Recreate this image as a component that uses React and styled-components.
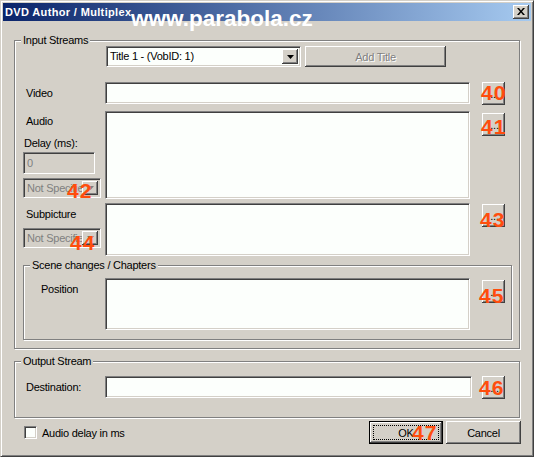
import React from "react";
import styled, { createGlobalStyle, css } from "styled-components";

const GlobalStyle = createGlobalStyle`
  html, body {
    margin: 0;
    padding: 0;
    background: #d4d0c8;
  }
  body {
    font-family: "Liberation Sans", Arial, sans-serif;
    font-size: 11px;
    letter-spacing: -0.25px;
    color: #000;
  }
  * {
    box-sizing: border-box;
  }
`;

const raised = css`
  background: #d4d0c8;
  box-shadow: inset -1px -1px #404040, inset 1px 1px #fff,
    inset -2px -2px #808080, inset 2px 2px #d4d0c8;
`;

const sunken = css`
  border: 1px solid;
  border-color: #808080 #fff #fff #808080;
  box-shadow: inset 1px 1px #404040, inset -1px -1px #d4d0c8;
`;

const Window = styled.div`
  position: relative;
  width: 534px;
  height: 457px;
  display: flex;
  flex-direction: column;
  padding: 2px;
  background: #d4d0c8;
  border: 1px solid;
  border-color: #d4d0c8 #404040 #404040 #d4d0c8;
  box-shadow: inset 1px 1px #fff, inset -1px -1px #808080;
  overflow: hidden;
`;

const TitleBar = styled.div`
  flex: none;
  height: 18px;
  display: flex;
  align-items: center;
  justify-content: space-between;
  padding: 0 2px;
  background: linear-gradient(to right, #0a246a, #a6caf0);
  color: #fff;
  font-weight: bold;
  font-size: 11px;
  letter-spacing: 0.35px;
`;

const CloseButton = styled.span`
  ${raised}
  width: 16px;
  height: 14px;
  display: flex;
  align-items: center;
  justify-content: center;
  padding: 0 1px 1px 0;
`;

const Watermark = styled.span`
  position: absolute;
  left: 130px;
  top: 7px;
  font-size: 22.5px;
  line-height: 22.5px;
  font-weight: bold;
  letter-spacing: 0;
  color: #fff;
  pointer-events: none;
`;

const Body = styled.div`
  flex: 1;
  display: flex;
  flex-direction: column;
  padding: 13px 11px 0 11px;
`;

const Group = styled.fieldset`
  margin: ${(p) => p.$mt || 0}px 0 0 0;
  padding: 0;
  min-width: 0;
  border: 1px solid #808080;
  box-shadow: inset 1px 1px #fff, 1px 1px #fff;
`;

const Legend = styled.legend`
  margin-left: 6px;
  padding: 0 2px;
  line-height: 12px;
  background: #d4d0c8;
`;

const GroupBody = styled.div`
  display: flex;
  flex-direction: column;
  padding: ${(p) => p.$pad};
`;

const Row = styled.div`
  display: flex;
  align-items: flex-start;
  margin-top: ${(p) => p.$mt || 0}px;
  padding-left: ${(p) => p.$indent || 0}px;
`;

const LabelCol = styled.div`
  flex: none;
  width: ${(p) => p.$w || 82}px;
  display: flex;
  flex-direction: column;
  align-items: flex-start;
`;

const Label = styled.span`
  display: block;
  line-height: 13px;
  white-space: nowrap;
  padding-left: ${(p) => p.$indent || 0}px;
  margin-top: ${(p) => p.$mt || 0}px;
`;

const Edit = styled.input`
  ${sunken}
  display: block;
  width: ${(p) => p.$w}px;
  height: ${(p) => p.$h || 22}px;
  margin: ${(p) => p.$mt || 0}px 0 0 0;
  padding: 0 3px;
  background: ${(p) => (p.disabled ? "#d4d0c8" : "#fcfffc")};
  color: ${(p) => (p.disabled ? "#808080" : "#000")};
  font: inherit;
  letter-spacing: inherit;
  outline: none;
`;

const ListBox = styled.div`
  ${sunken}
  flex: none;
  width: ${(p) => p.$w || 365}px;
  height: ${(p) => p.$h}px;
  background: #fcfffc;
`;

const Combo = styled.div`
  ${sunken}
  flex: none;
  width: ${(p) => p.$w}px;
  height: ${(p) => p.$h || 21}px;
  display: flex;
  align-items: stretch;
  padding: 2px;
  background: ${(p) => (p.$disabled ? "#d4d0c8" : "#fcfffc")};
  color: ${(p) => (p.$disabled ? "#808080" : "#000")};
`;

const ComboText = styled.span`
  flex: 1;
  min-width: 0;
  overflow: hidden;
  white-space: nowrap;
  padding-left: 1px;
  line-height: ${(p) => p.$lh || 15}px;
`;

const DropButton = styled.span`
  ${raised}
  flex: none;
  width: 16px;
  display: flex;
  align-items: center;
  justify-content: center;
`;

const PushButton = styled.button`
  ${raised}
  flex: none;
  width: ${(p) => p.$w}px;
  height: ${(p) => p.$h || 23}px;
  margin: 0 0 0 ${(p) => p.$ml || 0}px;
  padding: 0;
  border: none;
  font: inherit;
  letter-spacing: inherit;
  color: ${(p) => (p.disabled ? "#808080" : "#000")};
  text-shadow: ${(p) => (p.disabled ? "1px 1px #fff" : "none")};
`;

const DefaultButton = styled(PushButton)`
  border: 1px solid #000;
  outline: 1px dotted #000;
  outline-offset: -5px;
`;

const DotsButton = styled(PushButton)`
  width: 23px;
  padding-left: 2px;
`;

const Anchor = styled.span`
  position: relative;
  flex: none;
  display: block;
  margin: ${(p) => p.$mt || 0}px 0 0 ${(p) => p.$ml || 0}px;
`;

const Callout = styled.span`
  position: absolute;
  left: ${(p) => p.$x}px;
  top: ${(p) => p.$y}px;
  font-size: 21px;
  line-height: 21px;
  font-weight: bold;
  letter-spacing: 1px;
  color: #ff4d0d;
  white-space: nowrap;
  pointer-events: none;
`;

const Footer = styled.div`
  display: flex;
  align-items: center;
  margin-top: 3px;
  padding-left: 10px;
`;

const CheckBox = styled.span`
  ${sunken}
  width: 13px;
  height: 13px;
  background: #fcfffc;
`;

const CheckLabel = styled.span`
  margin-left: 5px;
`;

const FooterButtons = styled.div`
  display: flex;
  gap: 3px;
  margin: 0 -1px 0 auto;
`;

function Arrow({ color = "#000" }) {
  return (
    <svg width="7" height="4" viewBox="0 0 7 4">
      <path d="M0 0h7L3.5 4z" fill={color} />
    </svg>
  );
}

function Browse({ num, x, y, mt, ml = 12 }) {
  return (
    <Anchor $mt={mt} $ml={ml}>
      <DotsButton>...</DotsButton>
      <Callout $x={x} $y={y}>{num}</Callout>
    </Anchor>
  );
}

function LangCombo({ num, x, y, mt }) {
  return (
    <Anchor $mt={mt}>
      <Combo $w={78} $h={20} $disabled>
        <ComboText $lh={14}>Not Specified</ComboText>
        <DropButton>
          <Arrow color="#808080" />
        </DropButton>
      </Combo>
      <Callout $x={x} $y={y}>{num}</Callout>
    </Anchor>
  );
}

export default function App() {
  return (
    <>
      <GlobalStyle />
      <Window>
        <TitleBar>
          <span>DVD Author / Multiplex</span>
          <CloseButton>
            <svg width="8" height="7" viewBox="0 0 8 7">
              <path
                d="M0 0h2l2 2.4L6 0h2L5 3.5 8 7H6L4 4.6 2 7H0l3-3.5z"
                fill="#000"
              />
            </svg>
          </CloseButton>
        </TitleBar>
        <Watermark>www.parabola.cz</Watermark>

        <Body>
          <Group>
            <Legend>Input Streams</Legend>
            <GroupBody $pad="0 7px 8px 8px">
              <Row $indent={83}>
                <Combo $w={195}>
                  <ComboText>Title 1 - (VobID: 1)</ComboText>
                  <DropButton>
                    <Arrow />
                  </DropButton>
                </Combo>
                <PushButton $w={141} $h={21} $ml={4} disabled>
                  Add Title
                </PushButton>
              </Row>

              <Row $mt={15}>
                <LabelCol>
                  <Label $indent={3} $mt={5}>
                    Video
                  </Label>
                </LabelCol>
                <Edit $w={365} readOnly />
                <Browse num="40" x={-1} y={0} />
              </Row>

              <Row $mt={6}>
                <LabelCol>
                  <Label $indent={3} $mt={4}>
                    Audio
                  </Label>
                  <Label $indent={1} $mt={9}>
                    Delay (ms):
                  </Label>
                  <Edit $w={72} $mt={2} value="0" disabled readOnly />
                  <LangCombo num="42" x={44} y={2} mt={4} />
                </LabelCol>
                <ListBox $h={88} />
                <Browse num="41" x={-1} y={3} mt={2} />
              </Row>

              <Row $mt={4}>
                <LabelCol>
                  <Label $indent={3} $mt={5}>
                    Subpicture
                  </Label>
                  <LangCombo num="44" x={47} y={4} mt={7} />
                </LabelCol>
                <ListBox $h={53} />
                <Browse num="43" x={-2} y={5} mt={1} />
              </Row>

              <Group $mt={3}>
                <Legend>Scene changes / Chapters</Legend>
                <GroupBody $pad="7px 0 9px 0">
                  <Row>
                    <LabelCol $w={81}>
                      <Label $indent={17} $mt={5}>
                        Position
                      </Label>
                    </LabelCol>
                    <ListBox $h={52} />
                    <Browse num="45" x={-3} y={5} mt={2} />
                  </Row>
                </GroupBody>
              </Group>
            </GroupBody>
          </Group>

          <Group $mt={6}>
            <Legend>Output Stream</Legend>
            <GroupBody $pad="9px 0 18px 8px">
              <Row>
                <LabelCol>
                  <Label $indent={3} $mt={5}>
                    Destination:
                  </Label>
                </LabelCol>
                <Edit $w={367} readOnly />
                <Browse num="46" x={-3} y={1} ml={10} />
              </Row>
            </GroupBody>
          </Group>

          <Footer>
            <CheckBox />
            <CheckLabel>Audio delay in ms</CheckLabel>
            <FooterButtons>
              <Anchor>
                <DefaultButton $w={74}>OK</DefaultButton>
                <Callout $x={43} $y={1}>47</Callout>
              </Anchor>
              <PushButton $w={75}>Cancel</PushButton>
            </FooterButtons>
          </Footer>
        </Body>
      </Window>
    </>
  );
}
